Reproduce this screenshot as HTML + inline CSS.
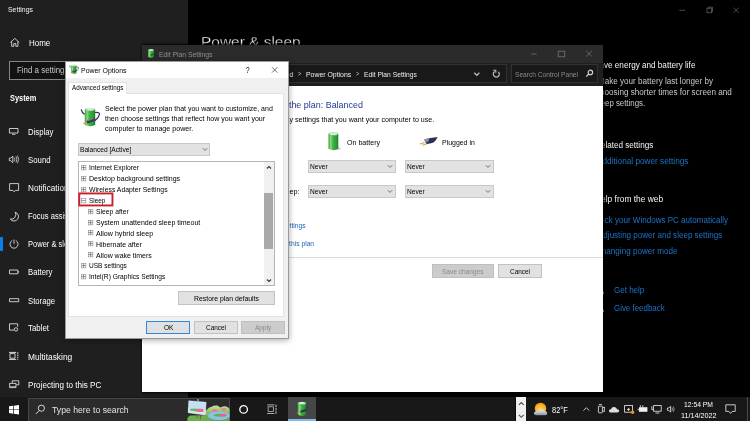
<!DOCTYPE html>
<html lang="en"><head><meta charset="utf-8"><title>Power Options</title>
<style>
html,body{margin:0;padding:0;}
body{width:750px;height:421px;overflow:hidden;background:#000;position:relative;font-family:"Liberation Sans",sans-serif;}
.layer{position:absolute;left:0;top:0;width:750px;height:421px;overflow:hidden;will-change:transform;}
.t{position:absolute;white-space:pre;line-height:1;transform-origin:0 50%;}
.b{position:absolute;box-sizing:border-box;}
svg{position:absolute;overflow:visible;}
.dd{background:#e2e2e2;border:1px solid #c9c9c9;}

</style></head>
<body>
<svg style="left:0;top:0" width="0" height="0"><defs>
  <linearGradient id="gcyl" x1="0" x2="1" y1="0" y2="0"><stop offset="0" stop-color="#2f9a35"/><stop offset="0.22" stop-color="#86e07c"/><stop offset="0.45" stop-color="#3fb244"/><stop offset="0.8" stop-color="#2f9a38"/><stop offset="1" stop-color="#1f7a2a"/></linearGradient>
</defs></svg>
<!-- ================= Settings app (background window) ================= -->
<div class="layer" id="settings">
  <div class="b" style="left:0;top:0;width:187.5px;height:421px;background:#1f1f1f"></div>
  <!-- search box -->
  <div class="b" style="left:9px;top:61px;width:168.6px;height:19px;border:1px solid #858585;background:#121212"></div>
  <!-- selected indicator -->
  <div class="b" style="left:0;top:236.8px;width:2.5px;height:14px;background:#0a7fe6"></div>
  <!-- window controls -->
  <svg style="left:676px;top:2.6px" width="70" height="16" viewBox="0 0 70 16" fill="none" stroke="#6a6a6a" stroke-width="0.7">
    <path d="M3.4 7.3h5.6"/>
    <rect x="31" y="5.2" width="4.3" height="4.6"/><path d="M32.2 5.2v-1h4.3v4.6h-1.2"/>
    <path d="M57.5 4.6l5.2 5.2M62.7 4.6l-5.2 5.2"/>
  </svg>
  <!-- home + nav icons -->
  <svg style="left:0;top:0" width="190" height="421" viewBox="0 0 190 421" fill="none" stroke="#f2f2f2" stroke-width="0.8" stroke-linejoin="round">
    <path d="M10.4 42.4L14.8 38.4L19.2 42.4M11.7 41.6V46.3H13.8V43.6H15.8V46.3H17.9V41.6"/>
    <!-- display -->
    <rect x="9.4" y="128.5" width="8.6" height="4.5"/><path d="M12 134.3h3.4"/>
    <!-- sound -->
    <path d="M9.3 158.1h1.5l2-2v6.6l-2-2H9.3z"/><path d="M14.4 157.6q0.9 1.8 0 3.6M16 156.4q1.7 3 0 6M17.5 155.6q2.2 3.8 0 7.6" stroke-width="0.7"/>
    <!-- notifications -->
    <path d="M9.6 183.6h9v6.8h-3.3l-1.2 1.4l-1.2-1.4H9.6z"/>
    <!-- focus -->
    <path d="M15.2 212.2A4.5 4.5 0 1 1 10.3 219.1A4.6 4.6 0 0 0 15.2 212.2z"/>
    <!-- power -->
    <path d="M12.2 240.6A4 4 0 1 0 15.8 240.6M14 239.6V243.8"/>
    <!-- battery -->
    <rect x="9.5" y="270" width="8.3" height="3.8"/><path d="M18.6 271.2v1.4" stroke-width="0.9"/>
    <!-- storage -->
    <rect x="9.5" y="298.7" width="9.2" height="3"/>
    <!-- tablet -->
    <path d="M14 330.1H9.5V323.8H17.7V326.8"/><circle cx="16" cy="329.4" r="1.7"/>
    <!-- multitasking -->
    <rect x="10" y="353.6" width="5" height="4.6"/><path d="M9 352.4h7.2M9 359.4h7.2" stroke-width="0.9"/><path d="M17.8 352.2v7.6" stroke-width="0.9" stroke-dasharray="1.6 0.7"/>
    <!-- projecting -->
    <path d="M12.2 383V380.8H18.8V384.8H16.4"/><rect x="9.6" y="383.4" width="6.4" height="3.4"/><path d="M9.2 387.6h7.2" stroke-width="0.7"/>
  </svg>
  <!-- right column icons -->
  <svg style="left:596px;top:284px" width="10" height="10" viewBox="0 0 10 10" fill="#fff"><circle cx="4" cy="3" r="2.4"/><path d="M0 10Q0 6 4 6Q8 6 8 10z"/></svg>
  <svg style="left:596px;top:302px" width="10" height="10" viewBox="0 0 10 10" fill="#fff"><circle cx="4" cy="3" r="2.4"/><path d="M0 10Q0 6 4 6Q8 6 8 10z"/></svg>
<span class="t" style="left:8.00px;top:7.00px;font-size:6.8px;color:#f2f2f2;transform:scaleX(1.0178);">Settings</span>
<span class="t" style="left:28.70px;top:39.00px;font-size:8.3px;color:#ffffff;transform:scaleX(0.9620);">Home</span>
<span class="t" style="left:16.50px;top:66.00px;font-size:8.3px;color:#c8c8c8;transform:scaleX(0.9536);">Find a setting</span>
<span class="t" style="left:9.60px;top:94.00px;font-size:8.3px;color:#ffffff;font-weight:700;transform:scaleX(0.8906);">System</span>
<span class="t" style="left:27.70px;top:128.00px;font-size:8.3px;color:#ffffff;transform:scaleX(0.9295);">Display</span>
<span class="t" style="left:27.70px;top:156.00px;font-size:8.3px;color:#ffffff;transform:scaleX(0.9417);">Sound</span>
<span class="t" style="left:27.70px;top:184.00px;font-size:8.3px;color:#ffffff;transform:scaleX(0.9862);">Notifications &amp; actions</span>
<span class="t" style="left:27.70px;top:212.00px;font-size:8.3px;color:#ffffff;transform:scaleX(0.9109);">Focus assist</span>
<span class="t" style="left:27.70px;top:240.00px;font-size:8.3px;color:#ffffff;transform:scaleX(0.9065);">Power &amp; sleep</span>
<span class="t" style="left:27.70px;top:268.00px;font-size:8.3px;color:#ffffff;transform:scaleX(0.9317);">Battery</span>
<span class="t" style="left:27.70px;top:297.00px;font-size:8.3px;color:#ffffff;transform:scaleX(0.9290);">Storage</span>
<span class="t" style="left:27.70px;top:324.00px;font-size:8.3px;color:#ffffff;transform:scaleX(0.9485);">Tablet</span>
<span class="t" style="left:27.70px;top:353.00px;font-size:8.3px;color:#ffffff;transform:scaleX(1.0088);">Multitasking</span>
<span class="t" style="left:27.70px;top:381.00px;font-size:8.3px;color:#ffffff;transform:scaleX(0.9751);">Projecting to this PC</span>
<span class="t" style="left:200.60px;top:35.00px;font-size:14.9px;color:#ffffff;-webkit-text-stroke:0.3px #000;transform:scaleX(1.0373);">Power &amp; sleep</span>
<span class="t" style="left:594.17px;top:61.00px;font-size:8.3px;color:#f4f4f4;transform:scaleX(0.9816);">Save energy and battery life</span>
<span class="t" style="left:597.99px;top:77.00px;font-size:8.3px;color:#c9c9c9;transform:scaleX(0.9741);">Make your battery last longer by</span>
<span class="t" style="left:596.26px;top:88.00px;font-size:8.3px;color:#c9c9c9;transform:scaleX(0.9778);">choosing shorter times for screen and</span>
<span class="t" style="left:595.48px;top:99.00px;font-size:8.3px;color:#c9c9c9;transform:scaleX(0.9448);">sleep settings.</span>
<span class="t" style="left:594.74px;top:141.00px;font-size:8.3px;color:#f4f4f4;transform:scaleX(0.9792);">Related settings</span>
<span class="t" style="left:596.61px;top:157.00px;font-size:8.3px;color:#1c74c6;transform:scaleX(0.9907);">Additional power settings</span>
<span class="t" style="left:594.77px;top:195.00px;font-size:8.3px;color:#f4f4f4;transform:scaleX(1.0132);">Help from the web</span>
<span class="t" style="left:589.98px;top:216.00px;font-size:8.3px;color:#1c74c6;transform:scaleX(0.9685);">Check your Windows PC automatically</span>
<span class="t" style="left:597.67px;top:231.00px;font-size:8.3px;color:#1c74c6;transform:scaleX(0.9695);">Adjusting power and sleep settings</span>
<span class="t" style="left:596.06px;top:247.00px;font-size:8.3px;color:#1c74c6;transform:scaleX(0.9765);">Changing power mode</span>
<span class="t" style="left:614.20px;top:286.00px;font-size:8.3px;color:#1c74c6;transform:scaleX(0.9657);">Get help</span>
<span class="t" style="left:614.20px;top:304.00px;font-size:8.3px;color:#1c74c6;transform:scaleX(0.9539);">Give feedback</span>
</div>

<!-- ================= Edit Plan Settings window ================= -->
<div class="b" style="left:142.7px;top:44.8px;width:460.3px;height:347px;box-shadow:0 0 2.5px 0.6px rgba(0,0,0,0.9);background:#000"></div>
<div class="layer" id="win" style="clip-path:inset(44.8px 147px 29.2px 142.7px)">
  <div class="b" style="left:142px;top:44.8px;width:461px;height:19px;background:#2b2b2b"></div>
  <div class="b" style="left:142px;top:63.2px;width:461px;height:23px;background:#1f1f1f"></div>
  <div class="b" style="left:142px;top:86.2px;width:461px;height:306px;background:#fff"></div>
  <!-- title icon -->
  <svg style="left:0;top:0" width="750" height="421" viewBox="0 0 750 421">
    <path d="M148 50.2V56.8Q151 58.8 154 56.8V50.2z" fill="url(#gcyl)"/>
    <ellipse cx="151" cy="50.2" rx="3" ry="1.1" fill="#7ad073"/>
    <ellipse cx="151" cy="50" rx="2.2" ry="0.7" fill="#dfe6ea"/>
    <path d="M154 54L150.4 55.4" stroke="#3a3d55" stroke-width="1.3"/>
    <path d="M150.4 55.5L148.4 56.1" stroke="#dba042" stroke-width="0.7"/>
  </svg>
  <!-- window controls -->
  <svg style="left:525px;top:46px" width="75" height="16" viewBox="0 0 75 16" fill="none" stroke="#7d7d7d" stroke-width="0.7">
    <path d="M6.3 8h5.4"/>
    <rect x="33.2" y="5.2" width="6.6" height="5.6"/>
    <path d="M61.4 5l5.4 5.4M66.8 5l-5.4 5.4"/>
  </svg>
  <!-- address field -->
  <div class="b" style="left:150px;top:64.4px;width:356.6px;height:18.6px;border:1px solid #323232;background:#191919"></div>
  <svg style="left:0;top:0" width="750" height="421" viewBox="0 0 750 421" fill="none" stroke="#bdbdbd" stroke-width="1.2">
    <path d="M474.2 72.8L476.8 75.3L479.4 72.8"/>
    <path d="M494.6 71.6A3 3 0 1 0 498.4 71.9" stroke-width="1.25"/><path d="M493.2 70.2h2.6v2.6" stroke-width="1.1"/>
  </svg>
  <!-- search field -->
  <div class="b" style="left:511.4px;top:64.4px;width:86.8px;height:18.6px;border:1px solid #323232;background:#191919"></div>
  <svg style="left:585.4px;top:69.4px" width="9" height="9" viewBox="0 0 9 9" fill="none" stroke="#d0d0d0" stroke-width="1.2"><circle cx="5.4" cy="3.4" r="2.2"/><path d="M3.8 5L1.2 7.6"/></svg>
  <!-- battery icon -->
  <svg style="left:0;top:0" width="750" height="421" viewBox="0 0 750 421">
    <ellipse cx="337.6" cy="148.6" rx="3.4" ry="1.6" fill="#d9d9d9"/>
    <path d="M328.5 134V148.8Q333.4 151.6 338.3 148.8V134z" fill="url(#gcyl)"/>
    <ellipse cx="333.4" cy="134" rx="4.9" ry="1.7" fill="#74cc6c"/>
    <ellipse cx="333.4" cy="133.8" rx="3.8" ry="1.2" fill="#dfe7ea"/>
  </svg>
  <!-- plug icon -->
  <svg style="left:0;top:0" width="750" height="421" viewBox="0 0 750 421">
    <path d="M420 143.9L424.6 142.4M422.4 145.3L427 143.8" stroke="#d8a84a" stroke-width="1.1"/>
    <path d="M424.2 139.6Q430 137.4 437.6 136.9Q436.4 140 433.6 142.4Q430 143.8 426.6 144z" fill="#2c2f52"/>
    <path d="M424.2 139.6Q427 138.4 429.6 138L428.4 141.4L425.6 142.4z" fill="#8a8ea8"/>
  </svg>
  <!-- dropdowns -->
  <div class="b dd" style="left:308px;top:160px;width:88px;height:12.8px"></div>
  <div class="b dd" style="left:405px;top:160px;width:88.5px;height:12.8px"></div>
  <div class="b dd" style="left:308px;top:184.8px;width:88px;height:12.8px"></div>
  <div class="b dd" style="left:405px;top:184.8px;width:88.5px;height:12.8px"></div>
  <svg style="left:387px;top:164px" width="6" height="5" viewBox="0 0 6 5" fill="none" stroke="#444" stroke-width="0.7"><path d="M0.8 1.2L3 3.4L5.2 1.2"/></svg>
  <svg style="left:484.5px;top:164px" width="6" height="5" viewBox="0 0 6 5" fill="none" stroke="#444" stroke-width="0.7"><path d="M0.8 1.2L3 3.4L5.2 1.2"/></svg>
  <svg style="left:387px;top:188.8px" width="6" height="5" viewBox="0 0 6 5" fill="none" stroke="#444" stroke-width="0.7"><path d="M0.8 1.2L3 3.4L5.2 1.2"/></svg>
  <svg style="left:484.5px;top:188.8px" width="6" height="5" viewBox="0 0 6 5" fill="none" stroke="#444" stroke-width="0.7"><path d="M0.8 1.2L3 3.4L5.2 1.2"/></svg>
  <!-- divider -->
  <div class="b" style="left:143px;top:257px;width:460px;height:1px;background:#dcdcdc"></div>
  <!-- buttons -->
  <div class="b" style="left:432px;top:264px;width:61.6px;height:14px;background:#cccccc;border:1px solid #bfbfbf"></div>
  <div class="b" style="left:498px;top:264px;width:43.6px;height:14px;background:#e1e1e1;border:1px solid #c2c2c2"></div>
<span class="t" style="left:158.50px;top:51.00px;font-size:7.3px;color:#8f8f8f;transform:scaleX(0.9287);">Edit Plan Settings</span>
<span class="t" style="left:305.90px;top:71.00px;font-size:7.3px;color:#ececec;transform:scaleX(0.9444);">Power Options</span>
<span class="t" style="left:364.20px;top:71.00px;font-size:7.3px;color:#ececec;transform:scaleX(0.9183);">Edit Plan Settings</span>
<span class="t" style="left:232.00px;top:71.00px;font-size:7.3px;color:#ececec;transform:scaleX(0.8845);">Hardware and Sound</span>
<span class="t" style="left:297.60px;top:71.00px;font-size:6.4px;color:#cfcfcf;transform:scaleX(0.8569);">&gt;</span>
<span class="t" style="left:355.80px;top:71.00px;font-size:6.4px;color:#cfcfcf;transform:scaleX(0.8569);">&gt;</span>
<span class="t" style="left:515.00px;top:71.00px;font-size:7.3px;color:#8a8a8a;transform:scaleX(0.9081);">Search Control Panel</span>
<span class="t" style="left:209.36px;top:101.00px;font-size:9.3px;color:#203a8f;transform:scaleX(0.9606);">Change settings for the plan: Balanced</span>
<span class="t" style="left:200.16px;top:116.00px;font-size:7.3px;color:#000;transform:scaleX(0.9722);">Choose the sleep and display settings that you want your computer to use.</span>
<span class="t" style="left:346.50px;top:139.00px;font-size:7.3px;color:#000;transform:scaleX(0.9713);">On battery</span>
<span class="t" style="left:441.80px;top:139.00px;font-size:7.3px;color:#000;transform:scaleX(0.9507);">Plugged in</span>
<span class="t" style="left:310.20px;top:163.00px;font-size:7.3px;color:#000;transform:scaleX(0.9040);">Never</span>
<span class="t" style="left:310.20px;top:188.00px;font-size:7.3px;color:#000;transform:scaleX(0.9040);">Never</span>
<span class="t" style="left:407.20px;top:163.00px;font-size:7.3px;color:#000;transform:scaleX(0.9040);">Never</span>
<span class="t" style="left:407.20px;top:188.00px;font-size:7.3px;color:#000;transform:scaleX(0.9040);">Never</span>
<span class="t" style="left:214.41px;top:188.00px;font-size:7.3px;color:#000;transform:scaleX(1.0000);">Put the computer to sleep:</span>
<span class="t" style="left:205.55px;top:222.00px;font-size:7.3px;color:#1f62b8;transform:scaleX(0.9200);">Change advanced power settings</span>
<span class="t" style="left:207.29px;top:240.00px;font-size:7.3px;color:#1f62b8;transform:scaleX(0.9200);">Restore default settings for this plan</span>
<span class="t" style="left:441.80px;top:268.00px;font-size:7.3px;color:#8a8a8a;transform:scaleX(0.8951);">Save changes</span>
<span class="t" style="left:509.80px;top:268.00px;font-size:7.3px;color:#000;transform:scaleX(0.8803);">Cancel</span>
</div>

<!-- ================= Power Options dialog ================= -->
<div class="b" style="left:64.8px;top:60.8px;width:224.2px;height:278.2px;box-shadow:0 1px 6px rgba(0,0,0,0.36);background:#fff"></div>
<div class="layer" id="dlg" style="clip-path:inset(60.8px 461px 82px 64.8px)">
  <div class="b" style="left:64.8px;top:60.8px;width:224.2px;height:278.2px;background:#f0f0f0;border:1px solid #9a9a9a"></div>
  <div class="b" style="left:65.6px;top:61.6px;width:222.6px;height:16.5px;background:#fff"></div>
  <!-- title icon -->
  <svg style="left:0;top:0" width="750" height="421" viewBox="0 0 750 421"><g transform="translate(74.0 69.5) scale(0.5)">
    <path d="M-9 -8Q-8.2 -4.4 -5.6 -3" fill="none" stroke="#2b2f52" stroke-width="1.2"/>
    <path d="M4.6 -4.9Q9.9 -5.6 9.2 -2.8Q8.2 0.6 5 3" fill="none" stroke="#2b2f52" stroke-width="1.2"/>
    <path d="M-5.4 -7.6V7.4Q-0.2 10.4 5 7.4V-7.6z" fill="url(#gcyl)"/>
    <ellipse cx="-0.2" cy="-7.8" rx="5.2" ry="1.7" fill="#6cc565"/>
    <ellipse cx="-0.2" cy="-8.1" rx="3.9" ry="1.2" fill="#dde6ea"/>
    <path d="M5.2 1.6L-3.4 5" stroke="#3a3d55" stroke-width="3"/>
    <path d="M3.6 1L-3 3.6" stroke="#8d90a6" stroke-width="0.8"/>
    <path d="M-3.4 5.1L-6.8 6.3" stroke="#dba042" stroke-width="1.4"/>
  </g></svg>
  <!-- ? and X -->
  <svg style="left:268px;top:64px" width="14" height="12" viewBox="0 0 14 12" fill="none" stroke="#222" stroke-width="0.65"><path d="M4 3.2l5.4 5.4M9.4 3.2L4 8.6"/></svg>
  <!-- tab -->
  <div class="b" style="left:68px;top:92.6px;width:215.8px;height:224.4px;background:#fff;border:1px solid #e2e2e2"></div>
  <div class="b" style="left:68.4px;top:82px;width:58.2px;height:11.8px;background:#fff;border:1px solid #e2e2e2;border-bottom:none"></div>
  <!-- big icon -->
  <svg style="left:0;top:0" width="750" height="421" viewBox="0 0 750 421"><g transform="translate(90.2 117.4) scale(1)">
    <path d="M-9 -8Q-8.2 -4.4 -5.6 -3" fill="none" stroke="#2b2f52" stroke-width="1.2"/>
    <path d="M4.6 -4.9Q9.9 -5.6 9.2 -2.8Q8.2 0.6 5 3" fill="none" stroke="#2b2f52" stroke-width="1.2"/>
    <path d="M-5.4 -7.6V7.4Q-0.2 10.4 5 7.4V-7.6z" fill="url(#gcyl)"/>
    <ellipse cx="-0.2" cy="-7.8" rx="5.2" ry="1.7" fill="#6cc565"/>
    <ellipse cx="-0.2" cy="-8.1" rx="3.9" ry="1.2" fill="#dde6ea"/>
    <path d="M5.2 1.6L-3.4 5" stroke="#3a3d55" stroke-width="3"/>
    <path d="M3.6 1L-3 3.6" stroke="#8d90a6" stroke-width="0.8"/>
    <path d="M-3.4 5.1L-6.8 6.3" stroke="#dba042" stroke-width="1.4"/>
  </g></svg>
  <!-- combo -->
  <div class="b dd" style="left:78px;top:142.7px;width:132px;height:13px"></div>
  <svg style="left:201.5px;top:147px" width="6" height="5" viewBox="0 0 6 5" fill="none" stroke="#444" stroke-width="0.7"><path d="M0.8 1.2L3 3.4L5.2 1.2"/></svg>
  <!-- tree -->
  <div class="b" style="left:78px;top:161px;width:196.6px;height:125px;background:#fff;border:1px solid #b3b6bb"></div>
  <div class="b" style="left:264.4px;top:162px;width:9.2px;height:123px;background:#f0f0f0"></div>
  <div class="b" style="left:264.4px;top:192.7px;width:8.7px;height:55.9px;background:#a9a9a9"></div>
  <svg style="left:266px;top:165px" width="6" height="5" viewBox="0 0 6 5" fill="none" stroke="#3a3a3a" stroke-width="1.1"><path d="M0.9 3.5L3 1.5L5.1 3.5"/></svg>
  <svg style="left:266px;top:277.8px" width="6" height="5" viewBox="0 0 6 5" fill="none" stroke="#3a3a3a" stroke-width="1.1"><path d="M0.9 1.5L3 3.5L5.1 1.5"/></svg>
  <!-- expand boxes -->
  <svg style="left:0;top:0" width="750" height="421" viewBox="0 0 750 421" fill="#fff" stroke="#8a8a8a" stroke-width="0.5">
    <g id="pb"><rect x="-2.2" y="-2.2" width="4.4" height="4.4"/><path d="M-1.3 0h2.6M0 -1.3v2.6" stroke="#444"/></g>
  </svg>
  <div class="b" style="left:79px;top:162px;width:185.4px;height:123px;overflow:hidden"><div style="position:absolute;left:-79px;top:-162px;width:750px;height:421px">
  <svg style="left:80.80px;top:165.00px" width="5.2" height="5.2" viewBox="-2.6 -2.6 5.2 5.2"><rect x="-2.3" y="-2.3" width="4.6" height="4.6" fill="#fff" stroke="#7f7f7f" stroke-width="0.55"/><path d="M-2 0h4M0 -2v4" stroke="#4a4a4a" stroke-width="0.6" fill="none"/></svg>
<svg style="left:80.80px;top:175.91px" width="5.2" height="5.2" viewBox="-2.6 -2.6 5.2 5.2"><rect x="-2.3" y="-2.3" width="4.6" height="4.6" fill="#fff" stroke="#7f7f7f" stroke-width="0.55"/><path d="M-2 0h4M0 -2v4" stroke="#4a4a4a" stroke-width="0.6" fill="none"/></svg>
<svg style="left:80.80px;top:186.82px" width="5.2" height="5.2" viewBox="-2.6 -2.6 5.2 5.2"><rect x="-2.3" y="-2.3" width="4.6" height="4.6" fill="#fff" stroke="#7f7f7f" stroke-width="0.55"/><path d="M-2 0h4M0 -2v4" stroke="#4a4a4a" stroke-width="0.6" fill="none"/></svg>
<svg style="left:80.80px;top:197.73px" width="5.2" height="5.2" viewBox="-2.6 -2.6 5.2 5.2"><rect x="-2.3" y="-2.3" width="4.6" height="4.6" fill="#fff" stroke="#7f7f7f" stroke-width="0.55"/><path d="M-2 0h4" stroke="#4a4a4a" stroke-width="0.6" fill="none"/></svg>
<svg style="left:88.40px;top:208.64px" width="5.2" height="5.2" viewBox="-2.6 -2.6 5.2 5.2"><rect x="-2.3" y="-2.3" width="4.6" height="4.6" fill="#fff" stroke="#7f7f7f" stroke-width="0.55"/><path d="M-2 0h4M0 -2v4" stroke="#4a4a4a" stroke-width="0.6" fill="none"/></svg>
<svg style="left:88.40px;top:219.55px" width="5.2" height="5.2" viewBox="-2.6 -2.6 5.2 5.2"><rect x="-2.3" y="-2.3" width="4.6" height="4.6" fill="#fff" stroke="#7f7f7f" stroke-width="0.55"/><path d="M-2 0h4M0 -2v4" stroke="#4a4a4a" stroke-width="0.6" fill="none"/></svg>
<svg style="left:88.40px;top:230.46px" width="5.2" height="5.2" viewBox="-2.6 -2.6 5.2 5.2"><rect x="-2.3" y="-2.3" width="4.6" height="4.6" fill="#fff" stroke="#7f7f7f" stroke-width="0.55"/><path d="M-2 0h4M0 -2v4" stroke="#4a4a4a" stroke-width="0.6" fill="none"/></svg>
<svg style="left:88.40px;top:241.37px" width="5.2" height="5.2" viewBox="-2.6 -2.6 5.2 5.2"><rect x="-2.3" y="-2.3" width="4.6" height="4.6" fill="#fff" stroke="#7f7f7f" stroke-width="0.55"/><path d="M-2 0h4M0 -2v4" stroke="#4a4a4a" stroke-width="0.6" fill="none"/></svg>
<svg style="left:88.40px;top:252.28px" width="5.2" height="5.2" viewBox="-2.6 -2.6 5.2 5.2"><rect x="-2.3" y="-2.3" width="4.6" height="4.6" fill="#fff" stroke="#7f7f7f" stroke-width="0.55"/><path d="M-2 0h4M0 -2v4" stroke="#4a4a4a" stroke-width="0.6" fill="none"/></svg>
<svg style="left:80.80px;top:263.19px" width="5.2" height="5.2" viewBox="-2.6 -2.6 5.2 5.2"><rect x="-2.3" y="-2.3" width="4.6" height="4.6" fill="#fff" stroke="#7f7f7f" stroke-width="0.55"/><path d="M-2 0h4M0 -2v4" stroke="#4a4a4a" stroke-width="0.6" fill="none"/></svg>
<svg style="left:80.80px;top:274.10px" width="5.2" height="5.2" viewBox="-2.6 -2.6 5.2 5.2"><rect x="-2.3" y="-2.3" width="4.6" height="4.6" fill="#fff" stroke="#7f7f7f" stroke-width="0.55"/><path d="M-2 0h4M0 -2v4" stroke="#4a4a4a" stroke-width="0.6" fill="none"/></svg>
<svg style="left:80.80px;top:285.01px" width="5.2" height="5.2" viewBox="-2.6 -2.6 5.2 5.2"><rect x="-2.3" y="-2.3" width="4.6" height="4.6" fill="#fff" stroke="#7f7f7f" stroke-width="0.55"/><path d="M-2 0h4M0 -2v4" stroke="#4a4a4a" stroke-width="0.6" fill="none"/></svg>

<span class="t" style="left:88.60px;top:164.00px;font-size:7.3px;color:#000;transform:scaleX(0.9267);">Internet Explorer</span>
<span class="t" style="left:88.60px;top:175.00px;font-size:7.3px;color:#000;transform:scaleX(0.9680);">Desktop background settings</span>
<span class="t" style="left:88.60px;top:186.00px;font-size:7.3px;color:#000;transform:scaleX(0.9406);">Wireless Adapter Settings</span>
<span class="t" style="left:88.60px;top:197.00px;font-size:7.3px;color:#000;transform:scaleX(0.8730);">Sleep</span>
<span class="t" style="left:95.60px;top:208.00px;font-size:7.3px;color:#000;transform:scaleX(0.9264);">Sleep after</span>
<span class="t" style="left:95.60px;top:219.00px;font-size:7.3px;color:#000;transform:scaleX(0.9630);">System unattended sleep timeout</span>
<span class="t" style="left:95.60px;top:230.00px;font-size:7.3px;color:#000;transform:scaleX(0.9709);">Allow hybrid sleep</span>
<span class="t" style="left:95.60px;top:241.00px;font-size:7.3px;color:#000;transform:scaleX(0.9507);">Hibernate after</span>
<span class="t" style="left:95.60px;top:252.00px;font-size:7.3px;color:#000;transform:scaleX(0.9556);">Allow wake timers</span>
<span class="t" style="left:88.60px;top:262.00px;font-size:7.3px;color:#000;transform:scaleX(0.8960);">USB settings</span>
<span class="t" style="left:88.60px;top:273.00px;font-size:7.3px;color:#000;transform:scaleX(0.9133);">Intel(R) Graphics Settings</span>
<span class="t" style="left:88.60px;top:284.00px;font-size:7.3px;color:#000;transform:scaleX(0.8234);">PCI Express</span>
  </div></div>
  <!-- red highlight -->
  <svg style="left:0;top:0" width="300" height="300" viewBox="0 0 300 300"><rect x="79.25" y="193.45" width="33.2" height="12" fill="none" stroke="#cb1f2b" stroke-width="1.9"/></svg>
  <!-- buttons -->
  <div class="b" style="left:178px;top:291.2px;width:96.8px;height:13.8px;background:#e1e1e1;border:1px solid #c2c2c2"></div>
  <div class="b" style="left:146.2px;top:321.2px;width:43.6px;height:12.4px;background:#e1e1e1;border:1px solid #2b8ae0"></div>
  <div class="b" style="left:194px;top:321.2px;width:43.6px;height:12.4px;background:#e1e1e1;border:1px solid #c2c2c2"></div>
  <div class="b" style="left:241.4px;top:321.2px;width:43.4px;height:12.4px;background:#cccccc;border:1px solid #bfbfbf"></div>
<span class="t" style="left:80.90px;top:67.00px;font-size:7.3px;color:#000;transform:scaleX(0.9507);">Power Options</span>
<span class="t" style="left:245.80px;top:67.00px;font-size:8.2px;color:#000;transform:scaleX(0.7890);">?</span>
<span class="t" style="left:71.90px;top:84.00px;font-size:7.3px;color:#000;transform:scaleX(0.8602);">Advanced settings</span>
<span class="t" style="left:104.60px;top:105.00px;font-size:7.3px;color:#000;transform:scaleX(0.9598);">Select the power plan that you want to customize, and</span>
<span class="t" style="left:104.60px;top:115.00px;font-size:7.3px;color:#000;transform:scaleX(0.9650);">then choose settings that reflect how you want your</span>
<span class="t" style="left:104.60px;top:125.00px;font-size:7.3px;color:#000;transform:scaleX(0.9751);">computer to manage power.</span>
<span class="t" style="left:79.90px;top:146.00px;font-size:7.3px;color:#000;transform:scaleX(0.9097);">Balanced [Active]</span>
<span class="t" style="left:194.00px;top:295.00px;font-size:7.3px;color:#000;transform:scaleX(0.9425);">Restore plan defaults</span>
<span class="t" style="left:163.50px;top:324.00px;font-size:7.3px;color:#000;transform:scaleX(0.8913);">OK</span>
<span class="t" style="left:205.80px;top:324.00px;font-size:7.3px;color:#000;transform:scaleX(0.8803);">Cancel</span>
<span class="t" style="left:255.00px;top:324.00px;font-size:7.3px;color:#8a8a8a;transform:scaleX(0.8979);">Apply</span>
</div>

<!-- ================= Taskbar ================= -->
<div class="layer" id="task" style="clip-path:inset(397.2px 0 0 0)">
  <div class="b" style="left:0;top:397.2px;width:750px;height:23.8px;background:#181818"></div>
  <!-- start -->
  <svg style="left:9px;top:404.6px" width="10" height="9.4" viewBox="0 0 10 9.4" fill="#fff"><path d="M0 1.3L4.1 0.75V4.4H0zM4.8 0.65L10 0V4.4H4.8zM0 5H4.1V8.65L0 8.1zM4.8 5H10V9.4L4.8 8.75z"/></svg>
  <!-- search -->
  <div class="b" style="left:28px;top:397.8px;width:202.2px;height:24px;background:#2b2b2b;border:1px solid #474747;border-bottom:none"></div>
  <svg style="left:35px;top:403.6px" width="11" height="11" viewBox="0 0 11 11" fill="none" stroke="#e8e8e8" stroke-width="0.9"><circle cx="6.4" cy="4.2" r="3.1"/><path d="M4.2 6.5L0.8 10"/></svg>
  <!-- illustration -->
  <svg style="left:0;top:0" width="750" height="421" viewBox="0 0 750 421">
    <defs><clipPath id="cpill"><rect x="187.4" y="398.6" width="42.4" height="22.4"/></clipPath>
    <linearGradient id="ghill" x1="0" x2="0" y1="0" y2="1"><stop offset="0" stop-color="#cfdca6"/><stop offset="0.45" stop-color="#8dbd62"/><stop offset="1" stop-color="#5fa046"/></linearGradient></defs>
    <g clip-path="url(#cpill)">
      <path d="M205.6 421V412Q207.4 407.8 211 407Q214 405.2 217.4 405.6Q219.4 407 220.6 407.6Q223.6 405.6 226.4 406.4Q229 407.6 229.8 409.4V421z" fill="url(#ghill)"/>
      <path d="M183.4 421L190 415.4L206 415.2L212 421z" fill="#6fae4c"/>
      <ellipse cx="218.8" cy="415.8" rx="11" ry="4.2" fill="#86c3e8"/>
      <ellipse cx="219.6" cy="415.3" rx="6" ry="1.5" fill="#6da94c"/>
      <rect x="220.2" y="413.8" width="6.2" height="2.8" rx="1.3" fill="#f0608f"/>
      <rect x="212.4" y="409.6" width="4.6" height="2.2" rx="1.1" fill="#f0709a"/>
      <rect x="221.4" y="408.2" width="4.8" height="2.2" rx="1.1" fill="#f07a8e"/>
      <path d="M197 414V418M200.4 414.6V419.2" stroke="#7d4a2c" stroke-width="0.8"/>
      <rect x="197.3" y="399" width="1.4" height="2" fill="#a8a8a8"/>
      <path d="M188.8 400.8L206.1 402.3L205.4 414.9L188.1 412.7z" fill="#c3e1f6" stroke="#eef5fa" stroke-width="0.5"/>
      <path d="M188.4 407.6L205.8 409.2L205.5 414.7L188.2 412.5z" fill="#cfe8f3"/>
      <path d="M190 408.8Q196 407.6 203 409.8L202.8 411.6Q196 411.6 190.2 410.4z" fill="#79b05a"/>
      <rect x="197.2" y="408.8" width="6.4" height="3.2" rx="1.5" fill="#f2668f"/>
    </g>
  </svg>
  <!-- cortana -->
  <svg style="left:238px;top:404px" width="11" height="11" viewBox="0 0 11 11" fill="none" stroke="#fff" stroke-width="1.3"><circle cx="5.6" cy="5.4" r="3.8"/></svg>
  <!-- task view -->
  <svg style="left:0;top:0" width="750" height="421" viewBox="0 0 750 421" fill="none" stroke="#d4d4d4" stroke-width="0.8">
    <rect x="268.1" y="406.8" width="5.4" height="4.8" stroke-width="0.7"/><path d="M267.2 404.9h7.2M267.2 413.5h7.2" stroke-width="0.8"/><path d="M276 404.6v9.2" stroke-width="0.9" stroke-dasharray="2.6 0.7"/>
  </svg>
  <!-- active app -->
  <div class="b" style="left:288px;top:397.2px;width:28.4px;height:24px;background:#464646"></div>
  <div class="b" style="left:288px;top:419.4px;width:28.4px;height:1.6px;background:#80bdee"></div>
  <svg style="left:0;top:0" width="750" height="421" viewBox="0 0 750 421">
    <path d="M297.7 403.2V414.6Q301.9 417.2 306.1 414.6V403.2z" fill="url(#gcyl)"/>
    <ellipse cx="301.9" cy="403.2" rx="4.2" ry="1.5" fill="#7ad073"/>
    <ellipse cx="301.9" cy="402.9" rx="3.1" ry="1" fill="#e3eaee"/>
    <path d="M306.6 409.6L300.4 412" stroke="#34374f" stroke-width="2.2"/>
    <path d="M300.6 412L297.2 413.2" stroke="#dba042" stroke-width="1"/>
    <path d="M306 406.4Q308 406.4 307.4 408.6" fill="none" stroke="#34374f" stroke-width="0.8"/>
  </svg>
  <!-- scroll widget -->
  <div class="b" style="left:515px;top:397.2px;width:1.2px;height:24px;background:#080808"></div>
  <div class="b" style="left:516px;top:397.4px;width:10.2px;height:24px;background:#efefef"></div>
  <svg style="left:0;top:0" width="750" height="421" viewBox="0 0 750 421" fill="none" stroke="#4c4c4c" stroke-width="1.1"><path d="M518.9 404.9L521.3 402.5L523.7 404.9M518.9 414.9L521.3 417.3L523.7 414.9"/></svg>
  <!-- weather -->
  <svg style="left:0;top:0" width="750" height="421" viewBox="0 0 750 421">
    <defs><radialGradient id="gsun" cx="0.5" cy="0.62" r="0.6"><stop offset="0" stop-color="#ffd84a"/><stop offset="0.55" stop-color="#fcbc2c"/><stop offset="1" stop-color="#f4981a"/></radialGradient>
    <linearGradient id="gcloud" x1="0" x2="0" y1="0" y2="1"><stop offset="0" stop-color="#ece2d2"/><stop offset="0.5" stop-color="#c5c6c8"/><stop offset="1" stop-color="#7d8ea3"/></linearGradient></defs>
    <circle cx="540.5" cy="408.4" r="5.7" fill="url(#gsun)"/>
    <path d="M536 415.3Q533.6 415.1 533.9 413Q534.3 411.4 536 411.5Q536.8 409.6 539 410Q540.6 408.8 542.4 409.8Q544.6 409.2 545.4 411.2Q547.4 411.4 547.2 413.4Q546.9 415.2 545 415.3z" fill="url(#gcloud)"/>
  </svg>
  <!-- tray -->
  <svg style="left:580px;top:400px" width="100" height="18" viewBox="0 0 100 18" fill="none" stroke="#f0f0f0" stroke-width="0.8">
    <path d="M3.4 10.6L6.3 7.7L9.2 10.6"/>
    <!-- meet now -->
    <rect x="18.4" y="6.2" width="4" height="6.6" rx="0.6"/><path d="M22.6 8l1.8-1v4.6l-1.8-1M18.8 4.6h3.2"/>
    <!-- cloud -->
    <path d="M30.6 12.4Q28.6 12.2 29 10.4Q29.4 9 31 9.2Q31.8 6.6 34.4 7Q36.6 7.2 37 9.2Q39.4 9.2 39.2 11Q39 12.4 37.4 12.4z" fill="#dedede" stroke="none"/>
    <!-- security -->
    <rect x="44.6" y="5.6" width="8" height="6.6"/><path d="M47 9.4h3.2M48.6 8v3"/>
    <circle cx="52.6" cy="12.2" r="1.7" fill="#f7941d" stroke="none"/>
    <!-- battery -->
    <rect x="59" y="7.2" width="8.4" height="4.6" fill="#f0f0f0" stroke="none"/><path d="M58.2 8.6v1.8M60.4 5.2v2M62.8 5.2v2"/>
    <!-- network -->
    <rect x="73.6" y="5.6" width="7.6" height="5.6"/><path d="M75.4 13h4M71.8 6.2v3.4h1.6"/>
    <!-- volume -->
    <path d="M87.4 8h1.4l1.8-1.8v6l-1.8-1.8h-1.4z"/><path d="M92 7.6q0.9 1.6 0 3.2M93.4 6.6q1.6 2.6 0 5.2" stroke-width="0.6"/>
  </svg>
  <div class="b" style="left:747px;top:397.2px;width:0.8px;height:24px;background:#4a4a4a"></div>
  <!-- notifications -->
  <svg style="left:725px;top:404px" width="11" height="11" viewBox="0 0 11 11" fill="none" stroke="#f0f0f0" stroke-width="0.8"><path d="M0.8 0.8h9.4v6.6H7.2L5.5 9.4 3.8 7.4H0.8z"/></svg>
<span class="t" style="left:52.00px;top:406.00px;font-size:8.3px;color:#e4e4e4;transform:scaleX(1.0458);">Type here to search</span>
<span class="t" style="left:552.40px;top:407.00px;font-size:8.2px;color:#ffffff;transform:scaleX(0.9085);">82°F</span>
<span class="t" style="left:683.80px;top:401.00px;font-size:7.2px;color:#ffffff;transform:scaleX(0.9394);">12:54 PM</span>
<span class="t" style="left:680.70px;top:412.00px;font-size:7.2px;color:#ffffff;transform:scaleX(1.0013);">11/14/2022</span>
</div>

</body></html>
